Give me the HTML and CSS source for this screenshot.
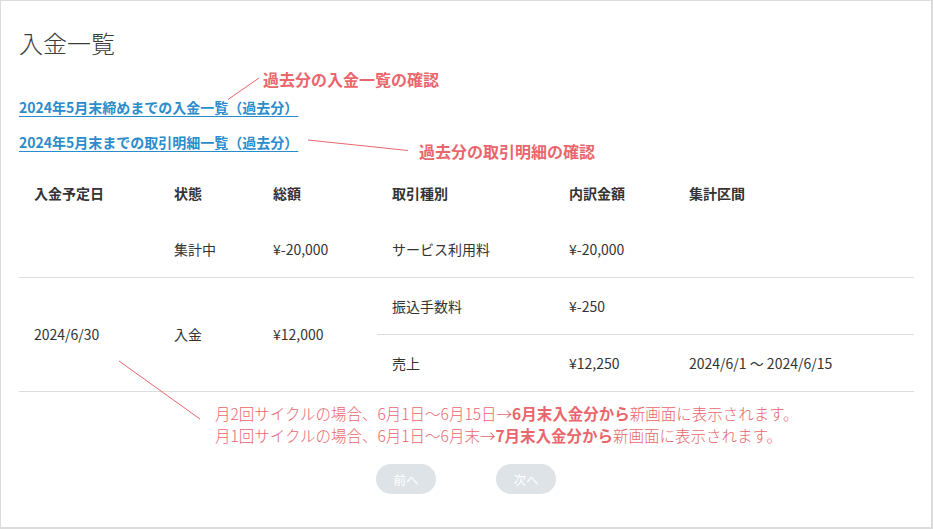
FILE: index.html
```html
<!DOCTYPE html>
<html lang="ja">
<head>
<meta charset="utf-8">
<title>入金一覧</title>
<link rel="stylesheet" href="styles.css">
</head>
<body>
<div class="page">
  <h1 class="title">入金一覧</h1>
  <div class="links">
    <a class="link" href="#">2024年5月末締めまでの入金一覧（過去分）</a>
    <a class="link" href="#">2024年5月末までの取引明細一覧（過去分）</a>
  </div>
  <table class="list">
    <colgroup>
      <col class="c1"><col class="c2"><col class="c3"><col class="c4"><col class="c5"><col class="c6">
    </colgroup>
    <thead>
      <tr>
        <th>入金予定日</th><th>状態</th><th>総額</th><th>取引種別</th><th>内訳金額</th><th>集計区間</th>
      </tr>
    </thead>
    <tbody>
      <tr class="r1">
        <td></td><td>集計中</td><td>¥-20,000</td><td>サービス利用料</td><td>¥-20,000</td><td></td>
      </tr>
      <tr class="sub">
        <td rowspan="2">2024/6/30</td><td rowspan="2">入金</td><td rowspan="2">¥12,000</td>
        <td>振込手数料</td><td>¥-250</td><td></td>
      </tr>
      <tr class="sub">
        <td>売上</td><td>¥12,250</td><td>2024/6/1 〜 2024/6/15</td>
      </tr>
    </tbody>
  </table>
  <div class="note">
    <p>月2回サイクルの場合、6月1日〜6月15日→<strong>6月末入金分から</strong>新画面に表示されます。</p>
    <p>月1回サイクルの場合、6月1日〜6月末→<strong>7月末入金分から</strong>新画面に表示されます。</p>
  </div>
  <div class="pager">
    <button class="btn" type="button">前へ</button>
    <button class="btn" type="button">次へ</button>
  </div>

  <div class="callout callout-a">過去分の入金一覧の確認</div>
  <div class="callout callout-b">過去分の取引明細の確認</div>
  <svg class="leaders" width="933" height="529" viewBox="0 0 933 529">
    <line x1="228" y1="99.5" x2="259" y2="78" />
    <line x1="308" y1="140" x2="408" y2="150.5" />
    <line x1="119" y1="361" x2="200" y2="419" />
  </svg>
</div>
</body>
</html>
```
FILE: styles.css
```css
* { box-sizing: border-box; }
html, body { margin: 0; padding: 0; background: #fff; }
body {
  font-family: "Noto Sans CJK JP", "Noto Sans", sans-serif;
  color: #333;
}
.page {
  position: relative;
  width: 933px;
  height: 529px;
  border: 1px solid #dcdcdc;
  border-right-width: 2px;
  border-bottom-width: 2px;
  padding: 24px 18px 0 18px;
  overflow: hidden;
}
.title {
  margin: 0;
  font-size: 24px;
  line-height: 36px;
  font-weight: 300;
  color: #3c3c3c;
}
.links {
  display: flex;
  flex-direction: column;
  align-items: flex-start;
  gap: 14px;
  margin-top: 36px;
}
.link {
  font-size: 14px;
  line-height: 21px;
  font-weight: 700;
  color: #2b8ccc;
  text-decoration: underline;
  text-underline-offset: 3px;
}
.list {
  margin-top: 13px;
  width: 895px;
  border-collapse: separate;
  border-spacing: 0;
  table-layout: fixed;
  font-size: 14px;
}
.c1 { width: 140px; }
.c2 { width: 99px; }
.c3 { width: 119px; }
.c4 { width: 177px; }
.c5 { width: 120px; }
.c6 { width: 240px; }
.list th, .list td {
  text-align: left;
  padding: 0 15px;
  line-height: 21px;
  vertical-align: middle;
  white-space: nowrap;
}
.list th {
  height: 55px;
  font-weight: 700;
  color: #333;
}
.list td {
  font-weight: 400;
  color: #333;
  border-bottom: 1px solid #dddddd;
}
.list .r1 td { height: 57px; padding-top: 1px; }
.list .sub td { height: 57px; }
.note {
  margin-top: 10px;
  padding-left: 196px;
  font-size: 15.5px;
  line-height: 22px;
  font-weight: 300;
  color: #ea666d;
}
.note p { margin: 0; }
.note strong { font-weight: 700; }
.pager {
  display: flex;
  justify-content: center;
  gap: 60px;
  margin-top: 18px;
}
.btn {
  width: 60px;
  height: 30px;
  border: 0;
  border-radius: 15px;
  background: #dee3e7;
  color: #fff;
  font-family: inherit;
  font-size: 12.5px;
  padding: 0;
}
.callout {
  position: absolute;
  font-size: 16px;
  line-height: 22px;
  font-weight: 700;
  color: #ea666d;
  white-space: nowrap;
}
.callout-a { left: 262px; top: 67px; }
.callout-b { left: 418px; top: 139px; }
.leaders {
  position: absolute;
  left: -1px;
  top: -1px;
  pointer-events: none;
}
.leaders line {
  stroke: #ea666d;
  stroke-width: 1;
}
```
